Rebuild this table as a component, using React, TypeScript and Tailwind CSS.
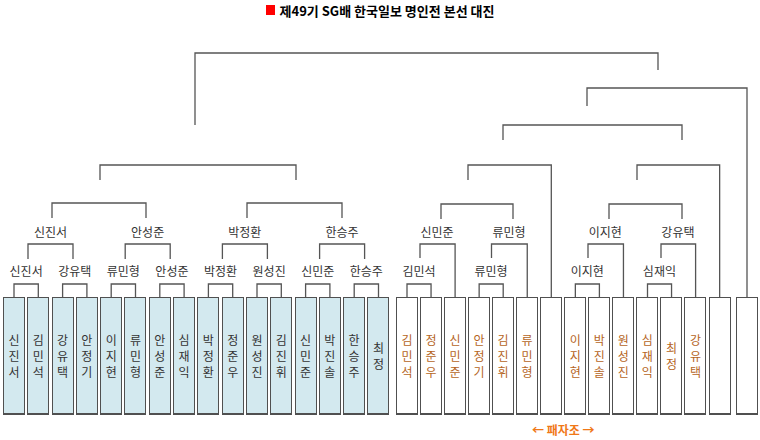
const FONT = "font-['Noto_Sans_CJK_KR','Noto_Sans',sans-serif]";
const GRID =
  "grid grid-cols-[repeat(16,24.3px)_4.3px_repeat(14,24.05px)_3.3px_24.05px] pl-[1.85px]";

const winners = ["신진서", "김민석", "강유택", "안정기", "이지현", "류민형", "안성준", "심재익", "박정환", "정준우", "원성진", "김진휘", "신민준", "박진솔", "한승주", "최정"];
const losers = ["김민석", "정준우", "신민준", "안정기", "김진휘", "류민형", "", "이지현", "박진솔", "원성진", "심재익", "최정", "강유택", ""];

const round2 = [
  { name: "신진서", cls: "col-start-1 col-span-4" },
  { name: "안성준", cls: "col-start-5 col-span-4" },
  { name: "박정환", cls: "col-start-9 col-span-4" },
  { name: "한승주", cls: "col-start-13 col-span-4" },
  { name: "신민준", cls: "col-start-18 col-span-3 pl-[12px]" },
  { name: "류민형", cls: "col-start-21 col-span-3 pl-[12px]" },
  { name: "이지현", cls: "col-start-25 col-span-3 pl-[12px]" },
  { name: "강유택", cls: "col-start-28 col-span-3 pl-[13px]" },
];

const round1 = [
  { name: "신진서", cls: "col-start-1 col-span-2" },
  { name: "강유택", cls: "col-start-3 col-span-2" },
  { name: "류민형", cls: "col-start-5 col-span-2" },
  { name: "안성준", cls: "col-start-7 col-span-2" },
  { name: "박정환", cls: "col-start-9 col-span-2" },
  { name: "원성진", cls: "col-start-11 col-span-2" },
  { name: "신민준", cls: "col-start-13 col-span-2" },
  { name: "한승주", cls: "col-start-15 col-span-2" },
  { name: "김민석", cls: "col-start-18 col-span-2" },
  { name: "류민형", cls: "col-start-21 col-span-2" },
  { name: "이지현", cls: "col-start-25 col-span-2" },
  { name: "심재익", cls: "col-start-28 col-span-2" },
];

// box centres, used by the bracket drawing
const leftX = (k: number) => 14 + 24.3 * k;
const rightX = (k: number) => 407 + 24.05 * (k - 16);

function bracketPaths() {
  const p: string[] = [
    "M195 125V53H658V70",
    "M587 106V88H747V297",
    "M503 140V125H682V140",
    "M100 180V165H296V180",
    "M52 218V203H146V218",
    "M247 218V203H342V218",
    "M441 219V204H513V219",
    "M609 219V204H682V219",
    `M468 180V165H${rightX(22)}V297`,
    `M637 180V165H${rightX(29)}V297`,
  ];
  for (let i = 0; i < 4; i++) {
    p.push(`M${28 + 97.2 * i} 259V244H${73 + 97.2 * i}V259`);
  }
  for (let k = 0; k < 16; k += 2) {
    p.push(`M${leftX(k)} 297V284H${leftX(k + 1)}V297`);
  }
  for (const k of [16, 19, 23, 26]) {
    p.push(`M${rightX(k)} 297V284H${rightX(k + 1)}V297`);
  }
  const mids = [
    [420, 18],
    [491.5, 21],
    [588, 25],
    [661, 28],
  ];
  for (const [x, k] of mids) {
    p.push(`M${x} 258V244H${rightX(k)}V297`);
  }
  return p;
}

function PlayerBox({ name, loser }: { name: string; loser?: boolean }) {
  return (
    <div
      className={`w-[22px] h-[118px] justify-self-center border border-b-2 border-[#505050] flex flex-col items-center justify-center text-[12px] leading-[16px] ${
        loser ? "bg-white text-[#b5651d]" : "bg-[#d3e9ef] text-[#333]"
      }`}
    >
      {name.split("").map((ch, i) => (
        <span key={i}>{ch}</span>
      ))}
    </div>
  );
}

export default function App() {
  return (
    <div className={`relative w-[760px] h-[440px] overflow-hidden bg-white ${FONT}`}>
      <div className="h-[20px] flex items-center justify-center">
        <span className="w-[9px] h-[10px] bg-[#ff0000] mr-[5px]" />
        <span className="text-[13px] font-bold text-black leading-none">
          제49기 SG배 한국일보 명인전 본선 대진
        </span>
      </div>

      <div className={`${GRID} mt-[202px] h-[20px] items-center`}>
        {round2.map((r) => (
          <div key={r.cls} className={`${r.cls} text-center text-[12px] text-[#333] whitespace-nowrap leading-none`}>
            {r.name}
          </div>
        ))}
      </div>

      <div className={`${GRID} mt-[19px] h-[20px] items-center`}>
        {round1.map((r) => (
          <div key={r.cls} className={`${r.cls} text-center text-[12px] text-[#333] whitespace-nowrap leading-none`}>
            {r.name}
          </div>
        ))}
      </div>

      <div className={`${GRID} mt-[16px]`}>
        {winners.map((n, i) => (
          <PlayerBox key={`w${i}`} name={n} />
        ))}
        <div />
        {losers.map((n, i) => (
          <PlayerBox key={`l${i}`} name={n} loser />
        ))}
        <div />
        <PlayerBox name="" loser />
      </div>

      <div className={`${GRID} mt-[4px] h-[22px] items-center`}>
        <div className="col-start-18 col-span-14 text-center text-[12px] font-bold text-[#f07818] leading-none whitespace-nowrap">
          ← 패자조 →
        </div>
      </div>

      <svg
        className="absolute inset-0 pointer-events-none"
        width="760"
        height="440"
        viewBox="0 0 760 440"
        fill="none"
      >
        {bracketPaths().map((d, i) => (
          <path key={i} d={d} stroke="#555" strokeWidth="1.3" />
        ))}
      </svg>
    </div>
  );
}
